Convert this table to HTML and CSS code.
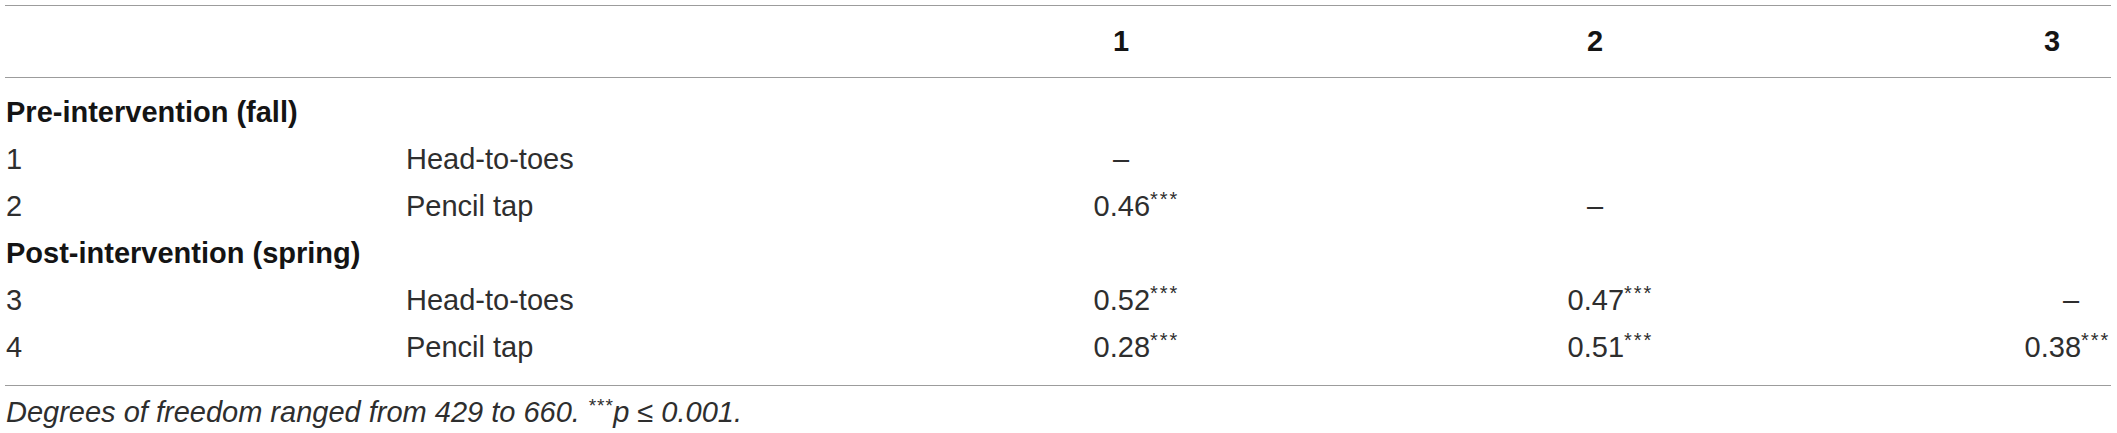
FILE: index.html
```html
<!DOCTYPE html>
<html>
<head>
<meta charset="utf-8">
<link rel="stylesheet" href="styles.css">
</head>
<body>
<div class="wrap">
  <div class="table">
    <div class="row head">
      <div class="c c1"></div>
      <div class="c c2"></div>
      <div class="c num">1</div>
      <div class="c num">2</div>
      <div class="c num last">3</div>
    </div>
    <div class="body">
      <div class="row section"><div class="c span">Pre-intervention (fall)</div></div>
      <div class="row">
        <div class="c c1">1</div>
        <div class="c c2">Head-to-toes</div>
        <div class="c num">–</div>
        <div class="c num"></div>
        <div class="c num last"></div>
      </div>
      <div class="row">
        <div class="c c1">2</div>
        <div class="c c2">Pencil tap</div>
        <div class="c num">0.46<sup>***</sup></div>
        <div class="c num">–</div>
        <div class="c num last"></div>
      </div>
      <div class="row section"><div class="c span">Post-intervention (spring)</div></div>
      <div class="row">
        <div class="c c1">3</div>
        <div class="c c2">Head-to-toes</div>
        <div class="c num">0.52<sup>***</sup></div>
        <div class="c num">0.47<sup>***</sup></div>
        <div class="c num last"><span class="dash-shift">–</span></div>
      </div>
      <div class="row">
        <div class="c c1">4</div>
        <div class="c c2">Pencil tap</div>
        <div class="c num">0.28<sup>***</sup></div>
        <div class="c num">0.51<sup>***</sup></div>
        <div class="c num last">0.38<sup>***</sup></div>
      </div>
    </div>
  </div>
  <p class="note">Degrees of freedom ranged from 429 to 660. <sup>***</sup>p ≤ 0.001.</p>
</div>
</body>
</html>
```

FILE: styles.css
```css
html, body {
  margin: 0;
  padding: 0;
  background: #ffffff;
}

body {
  font-family: "Liberation Sans", Arial, sans-serif;
  font-weight: 400;
  color: #2e2e2e;
  font-size: 29px;
}

.wrap {
  padding: 5px 6px 0 5px;
}

.table {
  border-top: 1px solid #9c9c9c;
  border-bottom: 1px solid #9c9c9c;
}

.row {
  display: grid;
  grid-template-columns: 401px 478px 474px 474px 279px;
  height: 47px;
  line-height: 47px;
}

.head {
  height: 71px;
  align-items: center;
  border-bottom: 1px solid #9c9c9c;
  font-weight: 700;
  color: #141414;
}

.body {
  padding: 11px 0 14px;
}

.c {
  white-space: nowrap;
}

.c1 {
  padding-left: 1px;
}

.num {
  text-align: center;
}

.num.last {
  padding-left: 161px;
  text-align: center;
}

.span {
  grid-column: 1 / -1;
  padding-left: 1px;
}

.section {
  font-weight: 700;
  color: #141414;
}

sup {
  font-size: 20px;
  line-height: 0;
  vertical-align: 10px;
  letter-spacing: 2px;
}

.num sup {
  margin-right: -31px;
}

.dash-shift {
  padding-left: 38px;
}

.note {
  margin: 6px 0 0 1px;
  font-style: italic;
  font-size: 29px;
  line-height: 40px;
}

.note sup {
  font-size: 19px;
  vertical-align: 10px;
  letter-spacing: 1px;
}
```
